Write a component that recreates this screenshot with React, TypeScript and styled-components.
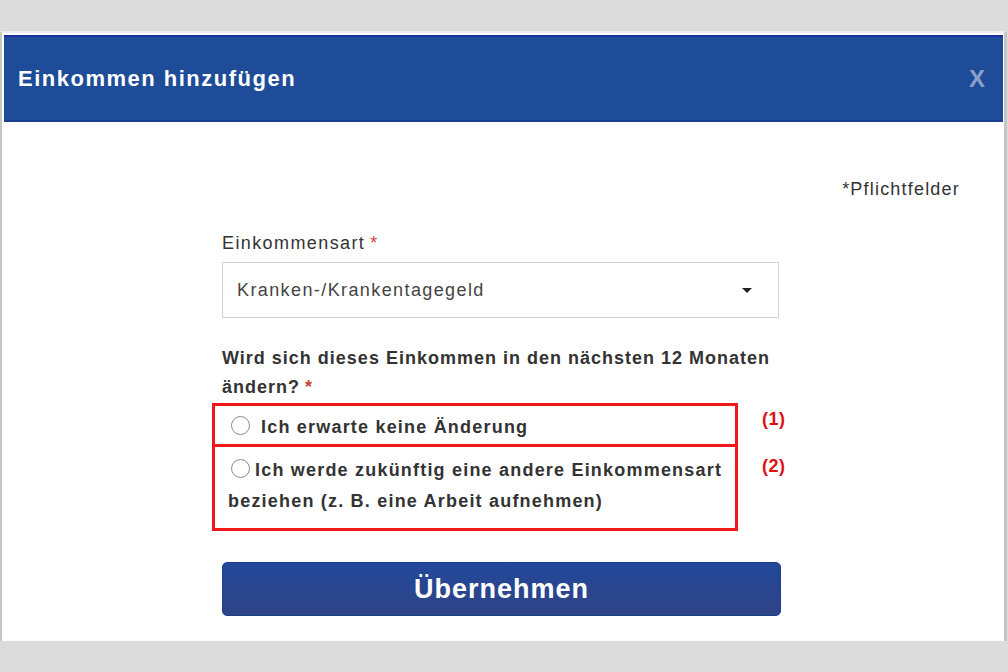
import React from 'react';
import styled, { createGlobalStyle } from 'styled-components';

const GlobalStyle = createGlobalStyle`
  html, body {
    margin: 0;
    padding: 0;
    background: #dcdcdc;
    font-family: "Liberation Sans", Arial, sans-serif;
  }
  * { box-sizing: border-box; }
`;

const Page = styled.div`
  height: 672px;
  padding-top: 31px;
  overflow: hidden;
`;

const Dialog = styled.div`
  width: 1007px;
  height: 610px;
  background: #fff;
  border-top: 2px solid #ececec;
  border-left: 2px solid #c6c6c6;
  border-right: 3px solid #c6c6c6;
  padding: 2px 1px 0 2px;
  display: flex;
  flex-direction: column;
`;

const Header = styled.div`
  height: 87px;
  flex-shrink: 0;
  background: #1e4c99;
  border-top: 2px solid #1a2fa0;
  border-bottom: 2px solid #1b3f8f;
  display: flex;
  align-items: center;
  justify-content: space-between;
  padding: 0 17px 0 14px;
`;

const Title = styled.h1`
  margin: 0;
  color: #fff;
  font-size: 22px;
  font-weight: 700;
  letter-spacing: 1.5px;
`;

const Close = styled.span`
  color: #8c9fcb;
  font-size: 24px;
  font-weight: 700;
  letter-spacing: 1px;
`;

const Body = styled.div`
  flex: 1;
  padding: 56px 0 24px 0;
`;

const Required = styled.div`
  text-align: right;
  padding-right: 43px;
  color: #333;
  font-size: 18px;
  line-height: 22px;
  letter-spacing: 1.2px;
`;

const Form = styled.div`
  width: 559px;
  margin: 32px 0 0 218px;
`;

const Label = styled.div<{ $bold?: boolean }>`
  color: #333;
  font-size: 18px;
  line-height: ${(p) => (p.$bold ? '29px' : '22px')};
  font-weight: ${(p) => (p.$bold ? 700 : 400)};
  letter-spacing: ${(p) => (p.$bold ? '1px' : '1.4px')};
`;

const NoWrap = styled.span`
  white-space: nowrap;
`;

const Star = styled.span`
  color: #c8473d;
  margin-left: 5px;
`;

const Select = styled.div`
  margin-top: 8px;
  height: 56px;
  width: 557px;
  border: 1px solid #d2d2d2;
  display: flex;
  align-items: center;
  justify-content: space-between;
  padding: 0 26px 0 14px;
  color: #444;
  font-size: 18px;
  letter-spacing: 1.4px;
`;

const Caret = styled.span`
  width: 0;
  height: 0;
  border-left: 5px solid transparent;
  border-right: 5px solid transparent;
  border-top: 5px solid #222;
`;

const Question = styled.div`
  margin-top: 26px;
`;

const Options = styled.div`
  margin-left: -10px;
  margin-top: 1px;
`;

const OptionRow = styled.div`
  display: flex;
  align-items: flex-start;
`;

const OptionBox = styled.div<{ $first?: boolean; $height: number; $indent: number }>`
  flex-shrink: 0;
  width: 526px;
  height: ${(p) => p.$height}px;
  border: 3px solid #f01818;
  border-top-width: ${(p) => (p.$first ? 3 : 0)}px;
  padding: ${(p) => (p.$first ? '5px' : '8px')} 8px 0 ${(p) => p.$indent}px;
  color: #333;
  font-size: 18px;
  font-weight: 700;
  line-height: ${(p) => (p.$first ? 32 : 31)}px;
  letter-spacing: 1.2px;
`;

const Radio = styled.span<{ $gap: number; $lead?: number }>`
  display: inline-block;
  width: 19px;
  height: 19px;
  border: 1.5px solid #8d8d8d;
  border-radius: 50%;
  background: #fff;
  vertical-align: -2px;
  margin-left: ${(p) => p.$lead ?? 0}px;
  margin-right: ${(p) => p.$gap}px;
`;

const Marker = styled.span<{ $top: number }>`
  flex-shrink: 0;
  color: #e01010;
  font-size: 18px;
  line-height: 20px;
  font-weight: 700;
  letter-spacing: 0.5px;
  margin-left: 24px;
  margin-top: ${(p) => p.$top}px;
`;

const Button = styled.button`
  display: block;
  margin-top: 31px;
  width: 559px;
  height: 54px;
  border: 1px solid #1c3f8c;
  border-radius: 5px;
  background: linear-gradient(#22489a, #2f4386);
  color: #fff;
  font-family: inherit;
  font-size: 27px;
  font-weight: 700;
  letter-spacing: 1px;
  cursor: pointer;
`;

export default function App() {
  return (
    <Page>
      <GlobalStyle />
      <Dialog>
        <Header>
          <Title>Einkommen hinzufügen</Title>
          <Close>X</Close>
        </Header>
        <Body>
          <Required>*Pflichtfelder</Required>
          <Form>
            <Label>
              Einkommensart<Star>*</Star>
            </Label>
            <Select>
              <span>Kranken-/Krankentagegeld</span>
              <Caret />
            </Select>
            <Question>
              <Label $bold>
                Wird sich dieses Einkommen in den nächsten 12 Monaten{' '}
                <NoWrap>
                  ändern?<Star>*</Star>
                </NoWrap>
              </Label>
            </Question>
            <Options>
              <OptionRow>
                <OptionBox $first $height={44} $indent={16}>
                  <Radio $gap={11} />
                  Ich erwarte keine Änderung
                </OptionBox>
                <Marker $top={6}>(1)</Marker>
              </OptionRow>
              <OptionRow>
                <OptionBox $height={84} $indent={13}>
                  <Radio $gap={5} $lead={3} />
                  Ich werde zukünftig eine andere Einkommensart beziehen (z. B. eine Arbeit aufnehmen)
                </OptionBox>
                <Marker $top={9}>(2)</Marker>
              </OptionRow>
            </Options>
            <Button>Übernehmen</Button>
          </Form>
        </Body>
      </Dialog>
    </Page>
  );
}
